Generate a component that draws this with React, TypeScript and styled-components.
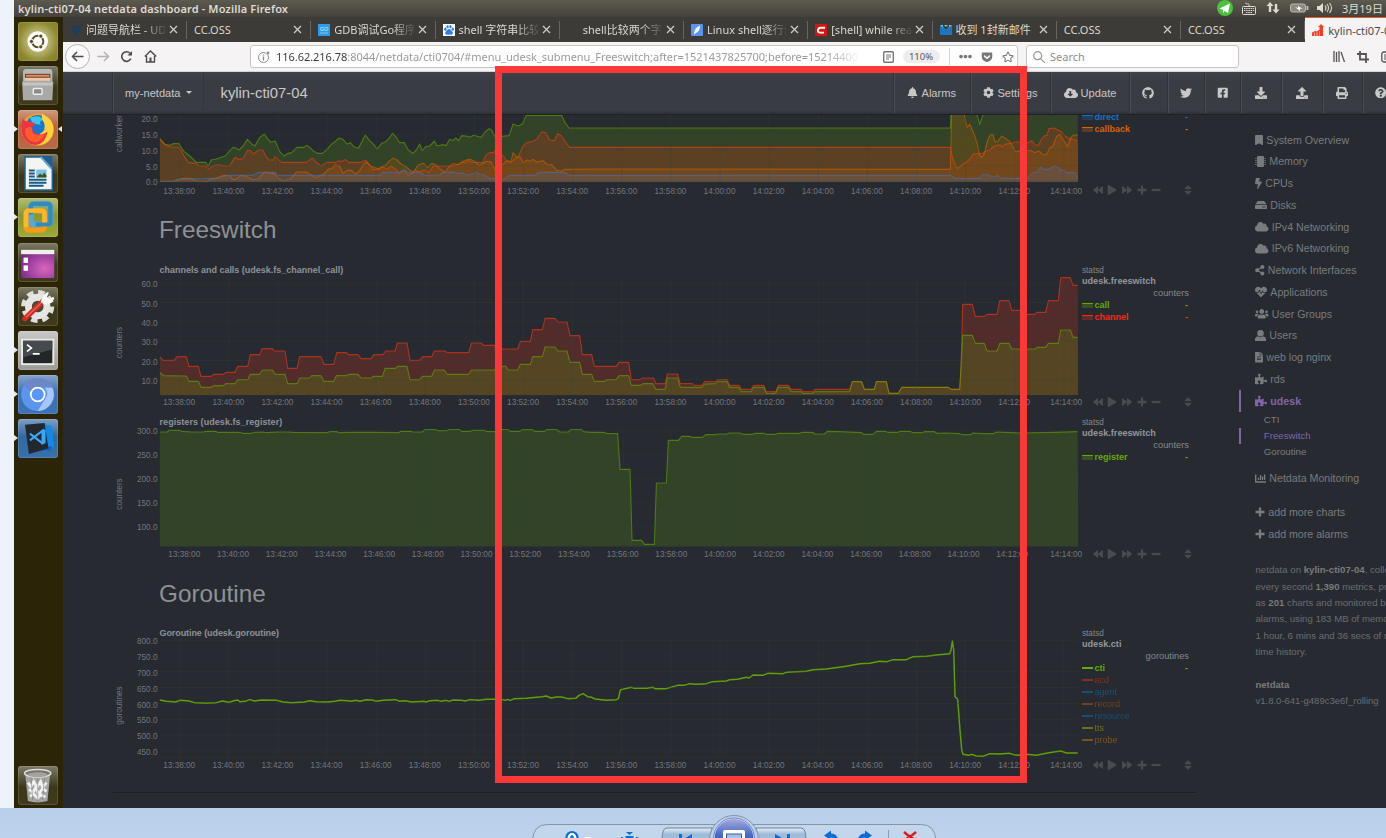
import React from "react";
import styled, { createGlobalStyle, css } from "styled-components";
import {
  FaBackward, FaBell, FaBolt, FaBookmark, FaChartBar, FaCloud, FaCloudDownloadAlt, FaCog, FaDownload,
  FaEllipsisH, FaFacebookSquare, FaFileAlt, FaForward, FaGetPocket, FaGithub, FaHdd, FaHeartbeat, FaMicrochip,
  FaPlay, FaPrint, FaPuzzlePiece, FaQuestionCircle, FaRegStar, FaShareAlt, FaSort, FaTwitter,
  FaUpload, FaUsers,
} from "react-icons/fa";

const GlobalStyle = createGlobalStyle`
  * { box-sizing: border-box; }
  body { margin: 0; overflow: hidden; background: #eef3fb; }
`;

const sans = `"Liberation Sans", Arial, sans-serif`;
const ui = `"Noto Sans", "Noto Sans CJK SC", sans-serif`;

/* ---------- page frame ---------- */

const Viewer = styled.div`
  position: relative;
  display: flex;
  flex-direction: column;
  width: 1386px;
  height: 838px;
  overflow: hidden;
  background: #eef3fb;
`;

const Desktop = styled.div`
  display: flex;
  flex-direction: column;
  height: 808px;
  margin-left: 14px;
  overflow: hidden;
  background: #272a31;
`;

const Highlight = styled.div`
  position: absolute;
  left: 495px;
  top: 66px;
  width: 532px;
  height: 717px;
  border: 7px solid #fc3737;
`;

/* ---------- system panel ---------- */

const Panel = styled.header`
  display: flex;
  align-items: center;
  flex: none;
  height: 17px;
  padding-left: 4px;
  background: linear-gradient(#5c594f, #44423b);
  color: #dfdbd2;
  font: 600 11px/17px ${ui};
`;

const PanelTitle = styled.span`
  position: relative;
  top: -0.5px;
  white-space: nowrap;
  letter-spacing: 0.14px;
`;

const Tray = styled.div`
  display: flex;
  flex: none;
  align-items: center;
  width: 170px;
  height: 17px;
  margin-left: auto;
  white-space: nowrap;
  font-weight: 400;
  overflow: hidden;
  svg { flex: none; }
`;

const Clock = styled.span`
  margin-left: 4px;
  font-size: 11px;
`;

/* ---------- launcher ---------- */

const Body = styled.div`
  display: flex;
  flex: 1;
  min-height: 0;
`;

const Launcher = styled.nav`
  display: flex;
  flex-direction: column;
  flex: none;
  gap: 5.2px;
  width: 49px;
  padding: 4.7px 0 3.5px;
  background: #2b2406;
`;

const Tile = styled.div<{ $bg: string; $last?: boolean }>`
  position: relative;
  flex: none;
  width: 39.4px;
  height: 39px;
  margin-left: 4.3px;
  border-radius: 3px;
  background: ${(p) => p.$bg};
  box-shadow: inset 0 0 0 1px rgba(255, 255, 255, 0.13);
  ${(p) => p.$last && css`margin-top: auto;`}
  > svg { display: block; width: 100%; height: 100%; }
`;

const Pip = styled.i<{ $side: "left" | "right" }>`
  position: absolute;
  top: 16px;
  ${(p) => (p.$side === "left" ? "left: -4.3px; border-left: 4px solid #e8e8e8;" : "right: -4.8px; border-right: 4px solid #e8e8e8;")}
  border-top: 3px solid transparent;
  border-bottom: 3px solid transparent;
`;

/* ---------- browser ---------- */

const Browser = styled.div`
  display: flex;
  flex-direction: column;
  flex: 1;
  min-width: 0;
`;

const TabStrip = styled.div`
  display: flex;
  flex: none;
  height: 25px;
  background: #3c3b37;
  overflow: hidden;
`;

const TabBox = styled.div<{ $active?: boolean; $first?: boolean }>`
  display: flex;
  align-items: center;
  flex: none;
  width: ${(p) => (p.$first ? 124 : 124.25)}px;
  height: 25px;
  padding: 0 9px 0 7px;
  color: #dcd8cf;
  font: 400 11px/25px ${ui};
  background: linear-gradient(#68665f, #68665f) right 4px / 1px 18px no-repeat;
  ${(p) => p.$active && css`
    background: #f5f3f3;
    border-top: 1px solid #e9562a;
    color: #4b4b4b;
  `}
`;

const TabLabel = styled.span<{ $fade?: boolean }>`
  flex: 1;
  min-width: 0;
  overflow: hidden;
  white-space: nowrap;
  ${(p) => p.$fade && css`mask-image: linear-gradient(90deg, #000 72%, transparent 104%);`}
`;

const Favicon = styled.span`
  flex: none;
  display: flex;
  width: 12px;
  height: 12px;
  margin-right: 4px;
`;

const CloseMark = styled.svg`
  flex: none;
  width: 9px;
  height: 9px;
  margin-left: 4px;
`;

const Toolbar = styled.div`
  display: flex;
  align-items: center;
  flex: none;
  height: 30px;
  background: #f5f3f3;
  border-bottom: 1px solid #d8d4d1;
  color: #5b5b5b;
`;

const NavButtons = styled.div`
  display: flex;
  align-items: center;
  flex: none;
  width: 187px;
`;

const BackButton = styled.span`
  display: grid;
  place-items: center;
  width: 25px;
  height: 25px;
  margin: 0 7px 0 2px;
  border: 1px solid #b9b5b2;
  border-radius: 50%;
  background: #fbfafa;
`;

const Field = styled.div<{ $w: number }>`
  display: flex;
  align-items: center;
  flex: none;
  width: ${(p) => p.$w}px;
  height: 23px;
  border: 1px solid #c8c5c2;
  border-radius: 3px;
  background: #fff;
  color: #8d8d8d;
  font: 400 11px/21px ${ui};
`;

const SearchField = styled(Field)`
  margin-left: 8px;
  svg { margin: 0 5px 0 6px; }
`;

const Address = styled.span`
  width: 597px;
  margin-left: 6px;
  overflow: hidden;
  white-space: nowrap;
  color: #9a9a9a;
  letter-spacing: -0.035px;
  mask-image: linear-gradient(90deg, #000 92%, transparent 98%);
  b { color: #3c3c3c; font-weight: 400; }
`;

const ZoomPill = styled.span`
  width: 37px;
  height: 13px;
  margin: 0 9px 0 8.5px;
  border-radius: 7px;
  background: #efedec;
  color: #555;
  font: 400 9.5px/13px ${ui};
  text-align: center;
`;

const FieldIcons = styled.span`
  display: flex;
  align-items: center;
  gap: 9px;
  height: 17px;
  padding-left: 9px;
  border-left: 1px solid #d8d5d3;
`;

const ToolbarEnd = styled.div`
  display: flex;
  align-items: center;
  gap: 12px;
  margin-left: 93.5px;
  svg { flex: none; }
`;

/* ---------- dashboard ---------- */

const NavBar = styled.div`
  display: flex;
  flex: none;
  height: 42px;
  padding-left: 49px;
  background: linear-gradient(#3f4249, #3a3c43 20%, #3a3c43 92%, #2d3036);
  color: #c8c8c8;
  font: 400 11.1px/42px ${sans};
`;

const NavCell = styled.div<{ $w: number }>`
  display: flex;
  align-items: center;
  justify-content: center;
  flex: none;
  gap: 3px;
  width: ${(p) => p.$w}px;
  height: 41px;
  border-left: 1px solid #303238;
  box-shadow: inset 1px 0 0 #4a4d53;
`;

const HostMenu = styled(NavCell)`
  padding-left: 1px;
`;

const HostName = styled.div`
  flex: none;
  width: 690px;
  padding-left: 17px;
  border-left: 1px solid #33363b;
  font-size: 14.8px;
`;

const Caret = styled.i`
  margin-left: 2px;
  border: 3px solid transparent;
  border-top-color: #c8c8c8;
  border-bottom: 0;
`;

const Content = styled.div`
  display: flex;
  flex: 1;
  min-height: 0;
  overflow: hidden;
  background: #272a31;
  box-shadow: inset 0 1px 0 #202227;
  font-family: ${sans};
`;

const Main = styled.main`
  flex: none;
  width: 1133px;
  padding-left: 51px;
`;

const SectionTitle = styled.h2<{ $h: number }>`
  margin: 0 0 0 45px;
  height: ${(p) => p.$h}px;
  color: #8e9195;
  font: 400 24.3px/${(p) => p.$h}px ${sans};
`;

const ChartRow = styled.section<{ $h: number; $gap?: number }>`
  display: flex;
  height: ${(p) => p.$h}px;
  margin-bottom: ${(p) => p.$gap ?? 0}px;
`;

const ChartMain = styled.div`
  flex: none;
  width: 968px;
`;

const ChartTitle = styled.div<{ $track: number }>`
  height: 15px;
  padding: 1px 0 0 45.5px;
  color: #8f9296;
  font: 700 9px/15px ${sans};
  letter-spacing: ${(p) => p.$track}px;
`;

const Plot = styled.svg`
  display: block;
  overflow: visible;
  text { font: 8.2px ${sans}; fill: #73767b; }
`;

const Side = styled.div<{ $shift: number }>`
  display: flex;
  flex-direction: column;
  width: 107px;
  padding-top: ${(p) => Math.max(p.$shift, 0)}px;
  margin-top: ${(p) => Math.min(p.$shift, 0)}px;
`;

const Source = styled.div<{ $bold?: boolean }>`
  height: 11px;
  color: ${(p) => (p.$bold ? "#94979a" : "#85888c")};
  font: ${(p) => (p.$bold ? "700 9.1px" : "400 8.2px")}/11px ${sans};
`;

const Units = styled.div`
  height: 12px;
  color: #85888c;
  font: 400 9.3px/13px ${sans};
  text-align: right;
`;

const Entry = styled.div<{ $c: string; $dim?: boolean }>`
  display: flex;
  align-items: center;
  flex: none;
  height: 12px;
  color: ${(p) => p.$c};
  font: ${(p) => (p.$dim ? 400 : 700)} 9px/12px ${sans};
  opacity: ${(p) => (p.$dim ? 0.58 : 1)};
  b { margin-left: auto; padding-right: 1px; }
`;

const Swatch = styled.i<{ $c: string; $area?: boolean }>`
  width: 10.5px;
  height: ${(p) => (p.$area ? 5 : 2)}px;
  margin-right: 2px;
  background: ${(p) => (p.$area ? `linear-gradient(${p.$c} 1px, color-mix(in srgb, ${p.$c} 30%, transparent) 1px)` : p.$c)};
`;

const ToolBox = styled.div`
  display: flex;
  align-items: center;
  gap: 4.7px;
  height: 15px;
  margin: auto 0 0.5px 10.5px;
  color: #484b50;
  svg { flex: none; }
  svg:last-child { margin-left: 16.5px; }
`;

const Rule = styled.hr`
  width: 1083px;
  margin: 19px 0 0 -1px;
  border: 0;
  border-top: 1px solid #1d1f23;
  border-bottom: 1px solid #2b2e34;
`;

const Sidebar = styled.aside`
  flex: none;
  width: 220px;
  margin-left: 43px;
  padding-top: 15.2px;
  white-space: nowrap;
`;

const MenuItem = styled.div<{ $active?: boolean; $top?: number }>`
  display: flex;
  align-items: center;
  gap: 3px;
  height: 21.77px;
  margin-top: ${(p) => p.$top ?? 0}px;
  padding-left: 14.3px;
  border-left: 2px solid ${(p) => (p.$active ? "#8265a8" : "transparent")};
  color: ${(p) => (p.$active ? "#8265a8" : "#797c7f")};
  font: ${(p) => (p.$active ? 700 : 400)} 10.65px/21px ${sans};
  svg { flex: none; }
`;

const SubItem = styled.div<{ $active?: boolean }>`
  height: 16px;
  padding-left: 22.8px;
  border-left: 2px solid ${(p) => (p.$active ? "#8265a8" : "transparent")};
  color: ${(p) => (p.$active ? "#8265a8" : "#797c7f")};
  font: 400 9.7px/16px ${sans};
`;

const Info = styled.p<{ $top: number; $size?: number }>`
  margin: ${(p) => p.$top}px 0 0 16.5px;
  color: #6a6d71;
  font: 400 ${(p) => p.$size ?? 9.5}px/16.3px ${sans};
  b { color: #797b7f; }
`;

/* ---------- photo viewer controls ---------- */

const Footer = styled.footer`
  display: flex;
  justify-content: center;
  flex: none;
  height: 30px;
  background: linear-gradient(#b9cee9, #bdd2ec);
  svg { display: block; margin-left: 81px; }
`;

/* ---------- data ---------- */

type Series = { points: string; color: string; fill?: boolean; bright?: boolean };

const tailSame =
  " 2258,815 2286,815 2294,838 2324,838 2330,815 2360,815 2368,850 2396,850 2406,832 2546,832 2554,838 2580,838 ";

const workers: Series[] = [
  { color: "#66aa00", fill: true, points: "180,85 196,103 212,106 220,101 238,101 246,115 254,125 270,138 290,157 318,157 326,168 334,150 350,147 376,138 388,125 400,112 410,115 418,120 430,108 443,88 456,102 466,108 480,82 494,72 505,88 514,97 526,93 540,124 553,138 564,130 576,128 592,112 612,112 620,106 630,112 642,124 654,130 668,130 682,118 694,104 708,93 718,84 730,88 742,102 752,98 762,110 776,115 797,75 810,92 822,103 832,117 846,100 858,95 866,87 879,70 890,82 900,98 914,98 926,120 940,130 950,120 960,102 968,122 978,110 990,108 1004,93 1012,108 1028,104 1040,106 1050,88 1060,92 1068,84 1076,92 1086,77 1100,78 1110,82 1122,76 1144,82 1156,66 1168,56 1176,60 1184,78 1206,79 1228,77 1240,42 1256,48 1268,42 1280,16 1386,16 1396,38 1408,54 2552,54 2554,6 2630,6 2640,44 2652,6 2934,6" },
  { color: "#fe3912", fill: true, points: "180,88 196,104 212,111 234,111 244,120 254,140 266,157 286,160 300,168 318,168 326,177 340,168 356,164 374,168 390,167 406,142 416,148 430,146 444,120 452,122 462,132 476,120 490,120 498,138 508,150 520,150 526,140 546,157 620,157 638,144 648,156 664,168 682,157 708,157 718,152 726,155 736,148 748,157 784,157 798,150 808,162 820,178 836,178 850,172 862,177 874,168 888,178 900,190 914,182 926,196 938,190 946,180 960,186 974,180 988,188 1000,168 1050,168 1060,160 1076,164 1086,157 1100,157 1104,150 1116,157 1150,157 1158,136 1170,128 1182,128 1186,122 1206,132 1220,150 1232,158 1242,150 1258,136 1268,112 1280,98 1300,94 1312,86 1326,66 1338,68 1350,90 1364,92 1374,70 1386,78 1396,95 1410,112 2552,112 2558,140 2566,165 2574,176 2590,162 2600,156 2612,145 2620,132 2648,130 2658,124 2670,120 2684,108 2700,104 2706,110 2718,102 2736,100 2746,96 2770,96 2784,98 2796,92 2806,104 2816,106 2826,86 2836,76 2842,76 2848,56 2864,54 2886,66 2896,78 2910,86 2934,92" },
  { color: "#d66300", fill: true, points: "180,214 230,213 250,205 270,205 290,213 324,215 330,208 350,204 372,196 390,198 402,210 410,206 424,196 440,200 450,204 460,210 476,206 490,190 500,186 512,190 524,190 534,202 550,214 560,210 574,206 590,186 620,186 636,196 650,203 664,196 676,190 684,178 696,176 706,164 720,168 730,190 744,180 756,182 768,192 780,182 790,164 800,156 812,168 824,172 836,176 846,170 860,164 870,152 880,145 892,150 904,162 916,168 930,180 942,186 956,164 972,160 984,172 996,160 1010,165 1020,176 1036,186 1050,168 1064,166 1078,162 1092,152 1110,148 1126,154 1138,166 1146,162 1160,154 1174,156 1186,180 1206,168 1218,154 1226,152 1234,156 1240,128 1252,142 1260,140 1272,158 1282,150 1290,154 1300,148 1310,156 1330,152 1344,166 1356,164 1370,180 1384,184 1396,178 1500,177 2552,178 2556,6 2592,6 2602,52 2610,42 2624,74 2634,106 2640,136 2646,142 2654,130 2664,90 2672,74 2680,74 2686,96 2696,92 2706,78 2716,84 2730,94 2740,112 2748,126 2760,122 2780,124 2790,120 2806,128 2816,122 2830,134 2840,134 2850,114 2860,108 2870,80 2880,72 2892,92 2904,110 2912,84 2920,76 2930,74 2934,78" },
  { color: "#4472b8", fill: true, points: "180,214 220,213 236,207 320,206 334,205 360,204 380,196 460,196 476,187 524,187 536,196 840,196 850,187 900,186 914,178 926,187 960,187 974,196 1020,195 1030,187 1060,186 1076,190 1090,190 1104,196 1120,192 1128,187 1140,192 1156,196 1170,206 1184,206 1206,214 1228,196 1306,196 1320,187 1390,187 1410,196 2552,196 2566,205 2640,205 2648,193 2664,195 2684,202 2694,196 2706,205 2770,205 2784,204 2796,190 2814,185 2822,170 2830,178 2848,178 2864,168 2876,172 2884,182 2892,180 2900,188 2924,187 2934,204" },
];

const channels: Series[] = [
  { color: "#fe3912", fill: true, points: "180,740 190,751 224,751 232,740 260,740 268,769 296,769 304,799 334,799 342,793 370,793 380,787 406,787 414,769 444,769 452,734 480,734 487,716 518,716 524,723 556,723 564,775 592,775 600,740 664,740 673,763 702,763 711,728 740,728 746,734 775,734 784,746 814,746 822,734 850,734 858,723 886,723 893,699 922,699 931,751 960,751 969,740 996,740 1004,723 1036,723 1042,728 1107,728 1115,699 1145,699 1152,706 1184,706 1188,717 1254,717 1262,694 1292,694 1299,659 1328,659 1336,625 1366,625 1374,636 1402,636 1411,677 1440,677 1448,734 1476,734 1484,769 1550,769 1558,757 1587,757 1595,809 1620,809 1628,804 1662,804 1668,821 1696,821 1703,792 1734,792 1742,821 1778,821 1784,826 1806,826 1815,815 1846,815 1854,809 1882,809 1890,826 1918,826 1926,838 1954,838 1962,826 1992,826 2000,845 2028,845 2036,826 2066,826 2074,838 2104,838 2110,845 2138,845 2146,838 2250,838" + tailSame + "2584,780 2589,583 2618,583 2627,619 2654,619 2662,613 2692,613 2700,572 2728,572 2736,601 2770,601 2778,613 2804,613 2812,607 2838,607 2846,572 2876,572 2883,503 2912,503 2920,526 2934,526" },
  { color: "#66aa00", fill: true, points: "180,787 192,797 260,798 268,814 296,814 304,832 334,832 342,827 370,827 378,821 406,821 414,809 444,809 452,793 480,793 488,780 518,780 526,793 556,793 564,821 592,821 600,804 630,804 636,797 664,797 673,814 702,814 710,797 740,797 746,793 775,793 784,804 814,804 822,799 848,799 856,775 886,775 894,769 922,769 931,809 960,809 968,799 996,799 1004,780 1034,780 1042,793 1107,793 1115,780 1184,780 1190,769 1218,769 1226,780 1254,780 1262,763 1292,763 1299,740 1328,740 1336,711 1366,711 1374,723 1402,723 1411,757 1440,757 1448,793 1476,793 1484,814 1514,814 1522,809 1550,809 1558,797 1587,797 1595,826 1622,826 1630,821 1660,821 1668,838 1696,838 1703,804 1734,804 1742,832 1806,832 1815,822 1846,821 1854,815 1882,815 1890,832 1916,832 1926,845 1954,845 1962,832 1992,832 2000,850 2028,850 2036,832 2066,832 2074,845 2104,845 2110,850 2138,850 2146,845 2250,845" + tailSame + "2589,676 2618,676 2627,700 2654,700 2662,723 2692,723 2700,700 2728,700 2736,717 2806,717 2812,712 2838,712 2846,700 2876,700 2883,660 2912,660 2920,682 2934,682" },
];

const registers: Series[] = [
  { color: "#66aa00", fill: true, points: "180,66 202,66 208,61 240,61 246,64 276,66 312,66 318,64 348,64 354,67 420,67 428,70 456,70 464,67 490,66 500,68 534,66 568,66 580,67 680,68 690,65 712,65 720,68 750,67 830,67 896,68 904,64 934,64 940,66 966,66 978,58 1006,58 1014,62 1040,62 1050,58 1078,58 1086,64 1112,64 1120,61 1152,61 1160,64 1184,65 1206,58 1224,58 1232,64 1260,64 1268,59 1298,59 1306,64 1334,64 1342,58 1370,58 1380,66 1406,66 1414,58 1444,58 1452,65 1476,67 1512,67 1520,70 1554,71 1561,178 1591,178 1597,391 1626,391 1634,403 1664,403 1670,219 1700,219 1706,91 1736,91 1746,79 1770,79 1778,82 1808,82 1818,74 1846,74 1854,72 1880,72 1890,69 1920,69 1930,73 1958,73 1966,70 1990,70 2000,73 2028,73 2036,70 2100,70 2108,67 2138,67 2146,72 2174,72 2182,64 2220,65 2286,68 2292,73 2320,73 2330,64 2356,64 2364,67 2394,67 2402,64 2430,64 2440,68 2466,68 2474,65 2504,65 2512,70 2540,69 2580,71 2590,74 2612,74 2620,69 2654,71 2680,71 2690,66 2720,67 2760,69 2860,67 2934,65" },
];

const goroutines: Series[] = [
  { color: "#66aa00", bright: true, points: "180,390 200,394 228,396 240,391 268,393 284,398 318,400 350,398 368,393 388,397 400,393 414,390 420,395 436,394 450,389 464,393 486,390 530,391 550,396 576,398 614,396 630,392 650,395 684,396 706,394 720,391 744,392 756,394 768,391 780,394 800,389 818,390 830,394 850,391 888,389 900,394 916,392 936,396 974,394 978,396 992,392 1014,391 1024,394 1040,391 1048,394 1060,390 1086,391 1096,393 1110,389 1140,391 1160,388 1184,388 1206,388 1216,391 1224,388 1232,391 1244,386 1280,385 1310,382 1328,380 1340,378 1354,384 1370,381 1386,381 1404,386 1428,385 1438,376 1450,371 1464,380 1476,382 1486,387 1520,391 1550,389 1556,386 1562,360 1576,356 1594,352 1604,355 1640,355 1660,352 1666,356 1700,356 1720,350 1734,346 1754,346 1770,341 1790,343 1820,341 1838,335 1880,333 1890,329 1914,328 1940,322 1948,324 1960,315 1990,316 2004,310 2050,311 2060,307 2120,304 2140,299 2180,297 2240,289 2280,281 2310,280 2340,274 2362,275 2380,269 2420,269 2440,260 2480,259 2510,255 2550,251 2554,240 2558,213 2562,240 2566,380 2574,388 2580,470 2586,540 2590,553 2606,556 2616,553 2630,558 2650,559 2670,551 2700,552 2730,550 2742,554 2760,556 2780,553 2810,556 2840,550 2866,545 2884,543 2900,549 2934,549" },
];

const times = Array.from({ length: 19 }, (_, i) => {
  const m = 38 + i * 2;
  return `${13 + Math.floor(m / 60)}:${String(m % 60).padStart(2, "0")}:00`;
});

const PlusIcon = () => <svg width="10" height="10" viewBox="0 0 10 10"><path d="M5 .5v9M.5 5h9" stroke="currentColor" strokeWidth="2.300" /></svg>;
const MinusIcon = () => <svg width="10" height="10" viewBox="0 0 10 10"><path d="M.5 5h9" stroke="currentColor" strokeWidth="2.300" /></svg>;
const PersonIcon = () => <svg width="11" height="11" viewBox="0 0 11 11"><path d="M5.500 0a3 3 0 0 1 0 6.600 3 3 0 0 1 0-6.600zM3 6.300q2.500 1.700 5 0Q11 6.800 11 9.300V11H0V9.300Q0 6.800 3 6.300z" fill="currentColor" /></svg>;

type ChartProps = {
  title?: string;
  track?: number;
  height: number;
  gap?: number;
  top: number;
  base: number;
  origin: number;
  series: Series[];
  ticks: [string, number][];
  unit: string;
  unitY: number;
  labelY: number;
  firstX?: number;
  stepX?: number;
  side: React.ReactNode;
  shift?: number;
};

function Chart(p: ChartProps) {
  const plotH = p.height - (p.title ? 15 : 0);
  const x0 = p.firstX ?? 179.7;
  const dx = p.stepX ?? 49.12;
  const clip = `clip-${p.unit}-${p.top}`;
  const clipTop = p.top === 114 ? 115 : p.top;
  return (
    <ChartRow $h={p.height} $gap={p.gap}>
      <ChartMain>
        {p.title && <ChartTitle $track={p.track ?? 0}>{p.title}</ChartTitle>}
        <Plot width={968} height={plotH} viewBox={`114 ${p.top} 968 ${plotH}`}>
          <clipPath id={clip}>
            <rect x={159.5} y={clipTop} width={919} height={p.base - clipTop + 1} />
          </clipPath>
          <g clipPath={`url(#${clip})`}>
            <g transform={`translate(99.7 ${p.origin}) scale(0.333333)`}>
              {p.series.map((s, i) => (
                <React.Fragment key={i}>
                  {s.fill && (
                    <polygon points={`180,${(p.base - p.origin) * 3} ${s.points} 2936,${(p.base - p.origin) * 3}`} fill={s.color} fillOpacity={0.2} />
                  )}
                  <polyline points={s.points} fill="none" stroke={s.color} strokeOpacity={s.bright ? 0.92 : 0.58} strokeWidth={s.bright ? 4.4 : 3.3} strokeLinejoin="round" />
                </React.Fragment>
              ))}
            </g>
          </g>
          <g stroke="#2f4a42" strokeOpacity={0.26}>
            {p.ticks.map(([t, y]) => <line key={t} x1={159.5} x2={1078.5} y1={y} y2={y} />)}
            {times.map((t, i) => <line key={t} x1={x0 + i * dx} x2={x0 + i * dx} y1={p.top} y2={p.base} />)}
            <line x1={159.5} x2={1078.5} y1={p.base} y2={p.base} />
          </g>
          {p.ticks.map(([t, y]) => <text key={t} x={157.500} y={y + 4.100} textAnchor="end">{t}</text>)}
          {times.map((t, i) => (
            <text key={t} x={i === 18 ? 1066.200 : x0 - 0.500 + i * dx} y={p.labelY + 2.500} textAnchor="middle">{t}</text>
          ))}
          <text transform={`translate(122 ${p.unitY}) rotate(-90)`} textAnchor="middle">{p.unit}</text>
        </Plot>
      </ChartMain>
      <Side $shift={p.shift ?? 3}>
        {p.side}
        <ToolBox>
          <FaBackward size={10} /><FaPlay size={10} /><FaForward size={10} /><PlusIcon /><MinusIcon /><FaSort size={12} />
        </ToolBox>
      </Side>
    </ChartRow>
  );
}

function Legend({ name, units, children }: { name: string; units: string; children: React.ReactNode }) {
  return (
    <>
      <Source>statsd</Source>
      <Source $bold>{name}</Source>
      <Units>{units}</Units>
      {children}
    </>
  );
}

function Dimension({ label, color, area, dim }: { label: string; color: string; area?: boolean; dim?: boolean }) {
  return (
    <Entry $c={color} $dim={dim}>
      <Swatch $c={color} $area={area} />
      {label}
      {!dim && <b>-</b>}
    </Entry>
  );
}

/* ---------- tabs ---------- */

const icons = {
  wolf: <svg viewBox="0 0 12 12"><path d="M1 1l3 1h4l3-1-1 5-2 3v2l-2 1-2-1V9L2 6z" fill="#1f3c58" /><path d="M4 5l1 1M8 5L7 6M5 9h2" stroke="#3c3b37" /></svg>,
  go: <svg viewBox="0 0 12 12"><rect width="12" height="12" fill="#2f9be8" /><text x="6" y="6.5" fontSize="5.5" textAnchor="middle" fill="#d8efff" fontFamily="Liberation Sans">GO</text><path d="M2 9h8" stroke="#7cc4f5" /></svg>,
  paw: <svg viewBox="0 0 12 12"><rect width="12" height="12" fill="#fff" /><g fill="#2f7de8"><ellipse cx="2.4" cy="5.2" rx="1.2" ry="1.6" /><ellipse cx="4.6" cy="2.7" rx="1.1" ry="1.6" /><ellipse cx="7.4" cy="2.7" rx="1.1" ry="1.6" /><ellipse cx="9.7" cy="5.2" rx="1.2" ry="1.6" /><path d="M6 5c1.5 0 2 1.500 3.200 2.500 1.500 1.800.3 3.500-1.400 3.300H4.200C2.400 11 1.400 9.300 2.800 7.500 4 6.500 4.500 5 6 5z" /></g></svg>,
  blank: <svg viewBox="0 0 12 12" />,
  quill: <svg viewBox="0 0 12 12"><rect width="12" height="12" rx="1" fill="#5a93f2" /><path d="M3 11c0-5 2-8 6-9.500C9 6 7 8.500 4.500 9z" fill="#fff" /></svg>,
  csdn: <svg viewBox="0 0 12 12"><rect width="12" height="12" fill="#d3160f" /><path d="M10 3.700H5.500Q3.500 3.700 3 6t1.500 2.600H9" fill="none" stroke="#fff" strokeWidth="1.900" /></svg>,
  mail: <svg viewBox="0 0 12 12"><path d="M0 1h12v10H0z" fill="#1b77c4" /><path d="M0 1l6 5 6-5" fill="#6cc0f2" /><path d="M3 0l3 3 3-3v3L6 6 3 3z" fill="#3c3b37" /></svg>,
  rise: <svg viewBox="0 0 12 12"><path d="M0 12V8.500L3 7l2 .5L7.500 5.500V3H6l3-3 3 3h-1v9z" fill="#ff3b24" /><path d="M2.500 8.500v4M5 8.500v4M7.500 7v5" stroke="#f5f3f3" strokeWidth=".6" /></svg>,
};

const tabs: { label: string; icon?: React.ReactNode; active?: boolean; fade?: boolean }[] = [
  { label: "问题导航栏 - UDesk", icon: icons.wolf, fade: true },
  { label: "CC.OSS" },
  { label: "GDB调试Go程序", icon: icons.go, fade: true },
  { label: "shell 字符串比较", icon: icons.paw, fade: true },
  { label: "shell比较两个字符", icon: icons.blank, fade: true },
  { label: "Linux shell逐行读", icon: icons.quill, fade: true },
  { label: "[shell] while read", icon: icons.csdn, fade: true },
  { label: "收到 1封新邮件", icon: icons.mail },
  { label: "CC.OSS" },
  { label: "CC.OSS" },
  { label: "kylin-cti07-04 netdata", icon: icons.rise, active: true },
];

/* ---------- launcher icons ---------- */

const glass = "linear-gradient(#7d7a66, #3b3719 55%, #3f3b1c)";

const launcher: { bg: string; art: React.ReactNode; left?: boolean; right?: boolean; last?: boolean }[] = [
  {
    bg: "radial-gradient(circle at 50% 50%, #c8c28a 25%, #8f8a30 70%, #807b1c)",
    art: <svg viewBox="0 0 40 40"><circle cx="20" cy="20" r="10.500" fill="#fff" /><circle cx="20" cy="20" r="5.800" fill="none" stroke="#575020" strokeWidth="2" /><g fill="#575020" stroke="#fff" strokeWidth="1"><circle cx="13.600" cy="20" r="2.200" /><circle cx="23.200" cy="14.500" r="2.200" /><circle cx="23.200" cy="25.500" r="2.200" /></g></svg>,
  },
  {
    bg: glass,
    art: <svg viewBox="0 0 40 40"><path d="M5 6q0-3 3-3h24q3 0 3 3v10H5z" fill="#b9b9b7" /><path d="M7 8h26v8H7z" fill="#584033" /><path d="M8 9h24v2H8z" fill="#eb8a5c" /><path d="M7 12h26v4H7z" fill="#f1c6a4" /><path d="M4 17q0-2 2-2h28q2 0 2 2l-1 18H5z" fill="#a9a9a8" /><path d="M5 17h30v3H5z" fill="#c5c5c4" /><rect x="15.500" y="23" width="9" height="6" rx="1" fill="#8a8a8a" stroke="#eee" strokeWidth="1.500" /></svg>,
  },
  {
    bg: "linear-gradient(#cf9a80, #b7653f 40%, #b56a45)", left: true, right: true,
    art: <svg viewBox="0 0 40 40"><circle cx="20" cy="20" r="16.500" fill="#f7a520" /><circle cx="20" cy="17" r="12" fill="#1974d2" /><path d="M12 8q10-4 14 2-5 1-3 5l-8-1z" fill="#39c3ed" /><path d="M25 4q12 6 11 17-2 14-16 15Q6 36 3.500 22q10 8 18 3 8-4 5-12-3-4-2-9z" fill="#ffd23a" /><path d="M5 9q2 3 5 3 5 0 8 2l-4 4q1 7 9 7 4 0 7-3-2 13-13 14Q5 34 3.500 22 3 14 5 9z" fill="#ef3340" /><path d="M14 18q-1 7 6 8 5 0 7-3-1 10-11 10-9-2-9-13 3-4 7-2z" fill="#ff5b2b" /></svg>,
  },
  {
    bg: glass,
    art: <svg viewBox="0 0 40 40"><path d="M7 3h19l9 10v24H7z" fill="#f4f4f2" stroke="#1b6194" strokeWidth="1.500" /><path d="M23 2h12v14z" fill="#1f5f93" /><path d="M23 3l11 12" stroke="#69a6cf" strokeWidth="2" /><path d="M11 17h6M11 20h6M11 23h6M11 26.500h18M11 29.500h18M11 32.500h15" stroke="#185b88" strokeWidth="2" /><rect x="18.500" y="16" width="10.500" height="8" fill="#79c0e8" /><path d="M18.500 24l4-4 2 2 2-3 2.500 3v2z" fill="#39531c" /></svg>,
  },
  {
    bg: "linear-gradient(#b2bd72, #87962f 45%, #9baa36)", left: true,
    art: <svg viewBox="0 0 40 40"><rect x="13" y="6" width="20" height="21" rx="3" fill="none" stroke="#51aadd" strokeWidth="6" /><rect x="8" y="13" width="19" height="20" rx="3" fill="none" stroke="#f49b19" strokeWidth="5.500" /><path d="M13 17V9q0-3 3-3h14q3 0 3 3v15q0 3-3 3H18" fill="none" stroke="#348bbb" strokeWidth="4.500" /><path d="M8 30V16q0-3 3-3h13q3 0 3 3v9" fill="none" stroke="#ffb72d" strokeWidth="4.500" /></svg>,
  },
  {
    bg: glass,
    art: <svg viewBox="0 0 40 40"><defs><radialGradient id="purple" cx=".7" cy=".65" r=".8"><stop offset="0" stopColor="#d768bd" /><stop offset=".5" stopColor="#a846a5" /><stop offset="1" stopColor="#712c83" /></radialGradient></defs><rect x="3" y="8" width="34" height="28" rx="1.500" fill="url(#purple)" /><rect x="3" y="7" width="34" height="4.500" fill="#efefec" /><rect x="5.500" y="15" width="4.500" height="5.500" fill="#fff" /><rect x="5.500" y="23" width="4.500" height="5.500" fill="#fff" /></svg>,
  },
  {
    bg: glass,
    art: <svg viewBox="0 0 40 40"><circle cx="20" cy="20" r="14.500" fill="none" stroke="#dededb" strokeWidth="5" strokeDasharray="6.600 4.788" /><circle cx="20" cy="20" r="9.500" fill="#4a4736" stroke="#e5e5e3" strokeWidth="7" /><path d="M7 32.500L26 14" stroke="#d42b22" strokeWidth="5.500" strokeLinecap="round" /><path d="M8 31L25 15" stroke="#f06a5d" strokeWidth="1.300" /><path d="M23 15l3-7 4-3 1.500 1-2 4 2 2.500L36 10l1 2-3 4.500-7 2z" fill="#f7f7f6" /></svg>,
  },
  {
    bg: "linear-gradient(#c7c7c5, #9a9a98)", left: true,
    art: <svg viewBox="0 0 40 40"><rect x="3" y="8" width="34" height="27" fill="#e9e9e7" /><rect x="5" y="10" width="30" height="23" fill="#222529" /><path d="M5 10h30v9L5 27z" fill="#454a4e" /><path d="M9 14l4.500 3.500L9 21M15 23.500h7" stroke="#fff" strokeWidth="1.700" fill="none" /></svg>,
  },
  {
    bg: "linear-gradient(#86a5cc, #3d70b0 45%, #3d72b3)", left: true,
    art: <svg viewBox="0 0 40 40"><circle cx="20" cy="20" r="17" fill="#5b95ee" /><path d="M20 3a17 17 0 0 1 15 9H20a8 8 0 0 0-7 5L6 10A17 17 0 0 1 20 3z" fill="#6c86c8" /><path d="M35 13a17 17 0 0 1-15 24l8-13a8 8 0 0 0-1-11z" fill="#a8c7f8" /><circle cx="20" cy="20" r="8" fill="#fff" /><circle cx="20" cy="20" r="6.200" fill="#5997f5" /></svg>,
  },
  {
    bg: "linear-gradient(#7d9fc2, #2f6aa4 45%, #386fa8)", left: true,
    art: <svg viewBox="0 0 40 40"><path d="M26 5l8 2 3 22-11 5z" fill="#1389e5" /><path d="M14 29l21-1-2 4-13 1z" fill="#0b64ba" /><path d="M7 6l20-2 4 26-20 6z" fill="#24272d" /><path d="M12 15l13 10M12 22L25 12v13l2-1V12l-2-.5" stroke="#3ba8f5" strokeWidth="2.200" fill="none" /></svg>,
  },
  {
    bg: glass, last: true,
    art: <svg viewBox="0 0 40 40"><path d="M7 6l3 30q10 3 20 0l3-30z" fill="#a5a6a4" /><path d="M10 17l3 4 3-5 3 6 4-6 2 6 4-5M11 24l4 3 3-5 3 7 4-6 4 3M12 31l4-2 4 4 3-4 5 3" stroke="#f1f1f1" strokeWidth="2.800" fill="none" /><path d="M13 10l2 25M20 10v27M27 10l-2 25" stroke="#777" strokeWidth=".6" /><ellipse cx="20" cy="7.500" rx="13.500" ry="4" fill="#77766c" stroke="#dcdcdc" strokeWidth="1.500" /><ellipse cx="20" cy="9" rx="10" ry="2.500" fill="#a2a29e" /></svg>,
  },
];

const menu: [React.ReactNode, string][] = [
  [<FaBookmark size={10.5} style={{ width: 8 }} />, "System Overview"],
  [<FaMicrochip size={11} />, "Memory"],
  [<FaBolt size={11} style={{ width: 7 }} />, "CPUs"],
  [<FaHdd size={12} />, "Disks"],
  [<FaCloud size={13.5} />, "IPv4 Networking"],
  [<FaCloud size={13.5} />, "IPv6 Networking"],
  [<FaShareAlt size={10.5} style={{ width: 9.5 }} />, "Network Interfaces"],
  [<FaHeartbeat size={12} />, "Applications"],
  [<FaUsers size={13.5} />, "User Groups"],
  [<PersonIcon />, "Users"],
  [<FaFileAlt size={10.5} style={{ width: 8 }} />, "web log nginx"],
  [<FaPuzzlePiece size={12} />, "rds"],
  [<FaPuzzlePiece size={12} />, "udesk"],
];

const navCells: [number, React.ReactNode][] = [
  [77.5, <><FaBell size={11} /> Alarms</>],
  [80, <><FaCog size={11} /> Settings</>],
  [79, <><FaCloudDownloadAlt size={14} /> Update</>],
  [37.5, <FaGithub size={12} />],
  [37.5, <FaTwitter size={12} />],
  [36, <FaFacebookSquare size={11.5} />],
  [40.5, <FaDownload size={12} />],
  [41, <FaUpload size={12} />],
  [40.5, <FaPrint size={12} />],
  [36, <FaQuestionCircle size={11.5} />],
];

export default function App() {
  return (
    <Viewer>
      <GlobalStyle />
      <Desktop>
        <Panel>
          <PanelTitle>kylin-cti07-04 netdata dashboard - Mozilla Firefox</PanelTitle>
          <Tray>
            <svg width="122" height="17" viewBox="0 0 122 17">
              <circle cx="9" cy="8" r="8" fill="#4cc13c" />
              <path d="M3.500 8.500L14 3.500 12 13 8.500 11 7 13.500V10z" fill="#fff" />
              <g fill="none" stroke="#dfdbd2"><rect x="26.500" y="6.500" width="13" height="8" rx="1" /><path d="M28 8.500h10M28 10.500h10M30 12.500h6M33 6V4h-3V2" strokeDasharray="1.500 .7" /></g>
              <g fill="#dfdbd2"><path d="M50.500 6l3.500-4 3.500 4h-2.300v6h-2.400V6zM56.500 9.500l3.500 4 3.500-4h-2.300V4h-2.400v5.500z" /></g>
              <rect x="74.500" y="4" width="15" height="8" rx="2" fill="#8b8982" stroke="#bdb9b1" /><path d="M90.500 6h2v4h-2z" fill="#bdb9b1" /><path d="M79 7l3 1V6l5 3-3-.5V11z" fill="#fff" />
              <path d="M101 6h2.500L107 3v10l-3.500-3H101z" fill="#dfdbd2" /><path d="M109 5.500q2 2.500 0 5M111 4q3 4 0 8M113.500 3q4 5 0 10" fill="none" stroke="#dfdbd2" strokeWidth="1.100" />
            </svg>
            <Clock>3月19日 14:20</Clock>
          </Tray>
        </Panel>
        <Body>
          <Launcher>
            {launcher.map((l, i) => (
              <Tile key={i} $bg={l.bg} $last={l.last}>
                {l.art}
                {l.left && <Pip $side="left" />}
                {l.right && <Pip $side="right" />}
              </Tile>
            ))}
          </Launcher>
          <Browser>
            <TabStrip>
              {tabs.map((t, i) => (
                <TabBox key={i} $active={t.active} $first={i === 0}>
                  {t.icon && <Favicon>{t.icon}</Favicon>}
                  <TabLabel $fade={t.fade}>{t.label}</TabLabel>
                  {!t.active && <CloseMark viewBox="0 0 9 9"><path d="M1 1l7 7M8 1L1 8" stroke="#cfcbc3" strokeWidth="1.300" /></CloseMark>}
                </TabBox>
              ))}
            </TabStrip>
            <Toolbar>
              <NavButtons>
                <BackButton><svg width="13" height="11" viewBox="0 0 13 11" fill="none" stroke="#4d4d4d" strokeWidth="1.500"><path d="M12.500 5.500H1.500M6 1L1.500 5.500 6 10" /></svg></BackButton>
                <svg width="13" height="11" viewBox="0 0 13 11" fill="none" stroke="#b5b3b1" strokeWidth="1.500"><path d="M.5 5.500h11M7 1l4.500 4.500L7 10" /></svg>
                <svg style={{ marginLeft: 10 }} width="13" height="13" viewBox="0 0 13 13" fill="none" stroke="#4d4d4d" strokeWidth="1.600"><path d="M10.800 8.700A4.800 4.800 0 1 1 10 3.200" /><path d="M12 1v4.600H7.400z" fill="#4d4d4d" stroke="none" /></svg>
                <svg style={{ marginLeft: 11 }} width="13" height="13" viewBox="0 0 13 13" fill="none" stroke="#4d4d4d" strokeWidth="1.400"><path d="M.8 6.500L6.500 1l5.700 5.500M2.500 6v6h8V6" /><path d="M5.500 7.500h2V12h-2z" fill="#4d4d4d" stroke="none" /></svg>
              </NavButtons>
              <Field $w={768}>
                <svg style={{ marginLeft: 7 }} width="12" height="12" viewBox="0 0 12 12" fill="none" stroke="#8a8a8a"><circle cx="5.500" cy="6.500" r="5" /><path d="M5.500 5.500v4M5.500 3.500v1" strokeWidth="1.300" /><circle cx="10" cy="2" r="1.700" fill="#8a8a8a" stroke="#fff" strokeWidth=".5" /></svg>
                <Address><b>116.62.216.78</b>:8044/netdata/cti0704/#menu_udesk_submenu_Freeswitch;after=1521437825700;before=15214400</Address>
                <svg style={{ marginLeft: 10 }} width="11" height="12" viewBox="0 0 11 12" fill="none" stroke="#777"><rect x=".7" y=".7" width="9.600" height="10.600" rx="1" strokeWidth="1.400" /><path d="M3 4h5M3 6h5M3 8h3" /></svg>
                <ZoomPill>110%</ZoomPill>
                <FieldIcons><FaEllipsisH size={13} color="#777" /><FaGetPocket size={12} color="#777" /><FaRegStar size={12} color="#777" /></FieldIcons>
              </Field>
              <SearchField $w={213}>
                <svg width="12" height="12" viewBox="0 0 12 12" fill="none" stroke="#979797" strokeWidth="1.200"><circle cx="4.700" cy="4.700" r="4" /><path d="M7.600 7.600L12 12" /></svg>
                Search
              </SearchField>
              <ToolbarEnd>
                <svg width="12" height="11" viewBox="0 0 12 11" stroke="#555" strokeWidth="1.300"><path d="M1 0v11M3.500 1v10M6 0v11M8 1l3.500 10" /></svg>
                <svg width="12" height="12" viewBox="0 0 12 12" fill="none" stroke="#555" strokeWidth="1.800"><path d="M3 0v8.500h9M0 3h9v9" /></svg>
                <svg width="12" height="12" viewBox="0 0 12 12" fill="none" stroke="#555"><rect x=".8" y="1" width="11" height="10" rx="2" strokeWidth="1.300" /><path d="M3 4h2M3 6h2M3 8h2" /></svg>
              </ToolbarEnd>
            </Toolbar>
            <NavBar>
              <HostMenu $w={90.5}>my-netdata <Caret /></HostMenu>
              <HostName>kylin-cti07-04</HostName>
              {navCells.map(([w, c], i) => <NavCell key={i} $w={w}>{c}</NavCell>)}
            </NavBar>
            <Content>
              <Main>
                <Chart
                  height={84} top={114} base={182} origin={110} series={workers} unit="callworker" unitY={133.5} labelY={191} shift={-2.7}
                  ticks={[["20.0", 118.2], ["15.0", 134], ["10.0", 149.7], ["5.0", 165.5], ["0.0", 181.2]]}
                  side={<><Dimension label="direct" color="#1d6fc0" area /><Dimension label="callback" color="#d2640a" area /></>}
                />
                <SectionTitle $h={64}>Freeswitch</SectionTitle>
                <Chart
                  title="channels and calls (udesk.fs_channel_call)" track={-0.01} height={148} gap={4} top={277} base={395} origin={110} series={channels}
                  unit="counters" unitY={342.5} labelY={402.5}
                  ticks={[["60.0", 283.2], ["50.0", 302.5], ["40.0", 321.8], ["30.0", 341.2], ["20.0", 360.5], ["10.0", 379.7]]}
                  side={<Legend name="udesk.freeswitch" units="counters"><Dimension label="call" color="#66aa00" area /><Dimension label="channel" color="#f32d18" area /></Legend>}
                />
                <Chart
                  title="registers (udesk.fs_register)" track={0.06} height={148} top={429} base={546.3} origin={410} series={registers}
                  unit="counters" unitY={494} labelY={554} firstX={184.8} stepX={48.7}
                  ticks={[["300.0", 430.3], ["250.0", 454.3], ["200.0", 478.3], ["150.0", 502.3], ["100.0", 526.3]]}
                  side={<Legend name="udesk.freeswitch" units="counters"><Dimension label="register" color="#66aa00" area /></Legend>}
                />
                <SectionTitle $h={63}>Goroutine</SectionTitle>
                <Chart
                  title="Goroutine (udesk.goroutine)" track={-0.08} height={148} top={640} base={757.3} origin={570} series={goroutines}
                  unit="goroutines" unitY={705.5} labelY={765.5}
                  ticks={[["800.0", 640.2], ["750.0", 655.9], ["700.0", 671.7], ["650.0", 687.5], ["600.0", 703.4], ["550.0", 719.2], ["500.0", 735.1], ["450.0", 750.9]]}
                  side={
                    <Legend name="udesk.cti" units="goroutines">
                      <Dimension label="cti" color="#66aa00" />
                      <Dimension label="acd" color="#c8321c" dim />
                      <Dimension label="agent" color="#0d6aa8" dim />
                      <Dimension label="record" color="#a85316" dim />
                      <Dimension label="resource" color="#0d6aa8" dim />
                      <Dimension label="tts" color="#a3a310" dim />
                      <Dimension label="probe" color="#b5700f" dim />
                    </Legend>
                  }
                />
                <Rule />
              </Main>
              <Sidebar>
                {menu.map(([icon, label], i) => <MenuItem key={label} $active={i === 12}>{icon}{label}</MenuItem>)}
                <SubItem>CTI</SubItem>
                <SubItem $active>Freeswitch</SubItem>
                <SubItem>Goroutine</SubItem>
                <MenuItem $top={7.5}><FaChartBar size={11} />Netdata Monitoring</MenuItem>
                <MenuItem $top={12}><PlusIcon />add more charts</MenuItem>
                <MenuItem><PlusIcon />add more alarms</MenuItem>
                <Info $top={17.5} $size={9.65}>
                  netdata on <b>kylin-cti07-04</b>, collects<br />
                  every second <b>1,390</b> metrics, presented<br />
                  as <b>201</b> charts and monitored by<br />
                  alarms, using 183 MB of memory for<br />
                  1 hour, 6 mins and 36 secs of real-<br />
                  time history.
                </Info>
                <Info $top={16.3}><b>netdata</b><br />v1.8.0-641-g489c3e6f_rolling</Info>
              </Sidebar>
            </Content>
          </Browser>
        </Body>
      </Desktop>
      <Footer>
        <svg width="408" height="30" viewBox="530 808 408 30">
          <defs>
            <linearGradient id="btn" x1="0" y1="0" x2="0" y2="1"><stop offset="0" stopColor="#e8f1fa" /><stop offset=".5" stopColor="#9fbcd8" /></linearGradient>
            <linearGradient id="orb" x1="0" y1="0" x2="0" y2="1"><stop offset="0" stopColor="#a9abdc" /><stop offset=".4" stopColor="#4a6cc6" /><stop offset="1" stopColor="#1d2f9c" /></linearGradient>
          </defs>
          <path d="M532.500 840q1-15.500 15-15.500h374q13 0 14.500 15.500" fill="#c3d7ec" stroke="#8494a6" />
          <path d="M662 840q0-12 5-12h45l-3 12zM806 840q0-12-5-12h-45l3 12z" fill="url(#btn)" stroke="#6d8299" />
          <circle cx="734" cy="840" r="24.500" fill="#bcd0ea" stroke="#8494a6" />
          <circle cx="734" cy="838.500" r="20" fill="url(#orb)" stroke="#dfe6fa" />
          <circle cx="734" cy="838.500" r="20.500" fill="none" stroke="#5272cf" strokeWidth=".8" />
          <path d="M723 840v-8q0-2 2-2h18q2 0 2 2v8z" fill="#fff" /><rect x="726.500" y="834" width="15" height="6" fill="#9bc3ee" stroke="#395a9c" />
          <circle cx="572" cy="837.500" r="5.500" fill="#fff" stroke="#0c6cd8" strokeWidth="2.200" /><path d="M572 835v4M570 837h4" stroke="#0c6cd8" strokeWidth="1.500" /><path d="M583 838q4-2 9 0z" fill="#fff" />
          <path d="M626 832h7l-3.500 3zM625.500 836h8v3h-8zM621 837h2v2h-2zM636 837h2v2h-2z" fill="#0c6cd8" />
          <path d="M679 834h3v6h-3zM692 834v5h-8zM790 834h-3v6h3zM775 834v5h9z" fill="#0c6cd8" />
          <path d="M824 835.500l7-5v3q6 0 7 6h-3q-1-2-4-2v3zM872 835.500l-7-5v3q-6 0-7 6h3q1-2 4-2v3z" fill="#0c6cd8" />
          <path d="M888.500 830v9" stroke="#8ba0b8" /><path d="M904 832l6 5 6-5M904 841l6-5 6 5" stroke="#d81e1e" strokeWidth="2.400" fill="none" />
        </svg>
      </Footer>
      <Highlight />
    </Viewer>
  );
}
